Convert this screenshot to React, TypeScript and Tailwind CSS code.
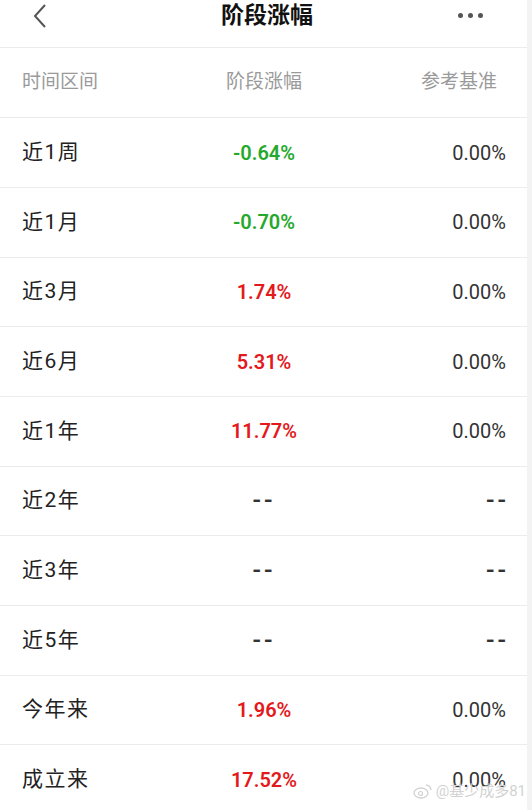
const rows: { label: string; value: string; tone: "up" | "down" | "none"; bench: string }[] = [
  { label: "近1周", value: "-0.64%", tone: "down", bench: "0.00%" },
  { label: "近1月", value: "-0.70%", tone: "down", bench: "0.00%" },
  { label: "近3月", value: "1.74%", tone: "up", bench: "0.00%" },
  { label: "近6月", value: "5.31%", tone: "up", bench: "0.00%" },
  { label: "近1年", value: "11.77%", tone: "up", bench: "0.00%" },
  { label: "近2年", value: "--", tone: "none", bench: "--" },
  { label: "近3年", value: "--", tone: "none", bench: "--" },
  { label: "近5年", value: "--", tone: "none", bench: "--" },
  { label: "今年来", value: "1.96%", tone: "up", bench: "0.00%" },
  { label: "成立来", value: "17.52%", tone: "up", bench: "0.00%" },
];

const toneClass = {
  up: "text-[#e3191c] font-semibold",
  down: "text-[#25a92c] font-semibold",
  none: "text-[#333] font-medium text-[25px] tracking-[3px]",
};

export default function App() {
  return (
    <div
      className="relative flex h-[810px] w-[532px] overflow-hidden bg-white"
      style={{ fontFamily: 'Roboto, "Noto Sans CJK SC", sans-serif' }}
    >
      <div className="w-[527px] shrink-0">
        {/* Nav bar */}
        <header className="relative flex h-[48px] items-center justify-between border-b border-[#ececec] pl-[32px] pr-[44px]">
          <svg width="16" height="26" viewBox="0 0 16 26" className="-mt-[16px]">
            <path d="M13 2 L3 13 L13 24" fill="none" stroke="#555" strokeWidth="2" />
          </svg>
          <h1 className="-mt-[15px] ml-[28px] text-[23px] font-bold text-[#111]">阶段涨幅</h1>
          <div className="-mt-[16px] flex gap-[5px]">
            <span className="h-[5px] w-[5px] rounded-full bg-[#555]" />
            <span className="h-[5px] w-[5px] rounded-full bg-[#555]" />
            <span className="h-[5px] w-[5px] rounded-full bg-[#555]" />
          </div>
        </header>

        {/* Column headings */}
        <div className="grid h-[70.33px] grid-cols-3 items-center border-b border-[#ececec] pl-[22px] pr-[30px] text-[19px] text-[#9a9a9a]">
          <span>时间区间</span>
          <span className="ml-[9px] text-center">阶段涨幅</span>
          <span className="text-right">参考基准</span>
        </div>

        {rows.map((r) => (
          <div
            key={r.label}
            className="grid h-[69.67px] grid-cols-3 items-center border-b border-[#ececec] pl-[22px] pr-[21px] text-[20px]"
          >
            <span className="text-[21px] tracking-[1.5px] text-[#222]">{r.label}</span>
            <span className={`text-center ${toneClass[r.tone]}`}>{r.value}</span>
            <span
              className={`text-right ${
                r.bench === "--" ? "-mr-[3px] text-[25px] font-medium tracking-[3px] text-[#333]" : "text-[#333]"
              }`}
            >
              {r.bench}
            </span>
          </div>
        ))}
      </div>
      <div className="flex-1 bg-[#f3f3f3]" />

      {/* watermark */}
      <div className="pointer-events-none absolute bottom-[8px] right-[6px] flex items-center gap-[3px] text-[15px] text-[#d2d2d2]">
        <svg width="20" height="16" viewBox="0 0 20 16">
          <ellipse cx="8" cy="10" rx="7" ry="5" fill="none" stroke="#d2d2d2" strokeWidth="1.3" />
          <circle cx="7.5" cy="10.5" r="2" fill="none" stroke="#d2d2d2" strokeWidth="1.2" />
          <path d="M13 2 a5 5 0 0 1 5 5" fill="none" stroke="#d2d2d2" strokeWidth="1.3" />
        </svg>
        <span>@基少成多81</span>
      </div>
    </div>
  );
}
